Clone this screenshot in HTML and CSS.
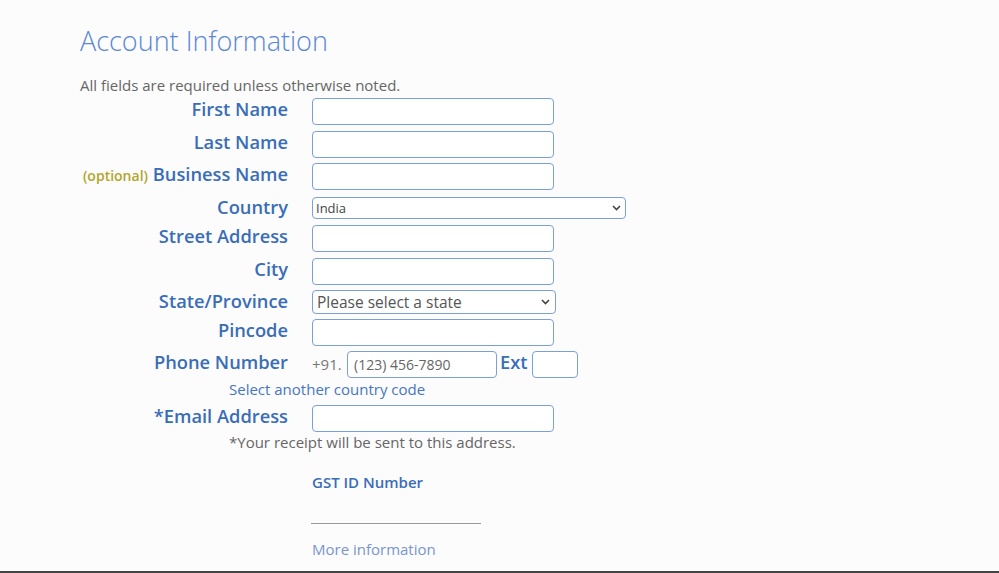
FILE: index.html
```html
<!DOCTYPE html>
<html lang="en">
<head>
<meta charset="utf-8">
<title>Account Information</title>
<link rel="stylesheet" href="styles.css">
</head>
<body>
<div class="page">
  <h1 class="title">Account Information</h1>
  <p class="note">All fields are required unless otherwise noted.</p>
  <form class="form">
    <div class="row row-first">
      <label class="label">First Name</label>
      <input class="field" type="text">
    </div>
    <div class="row row-tight">
      <label class="label">Last Name</label>
      <input class="field" type="text">
    </div>
    <div class="row">
      <label class="label"><span class="optional">(optional)</span> Business Name</label>
      <input class="field" type="text">
    </div>
    <div class="row row-country">
      <label class="label">Country</label>
      <div class="select-wrap select-country">
        <select class="select"><option>India</option></select>
        <svg class="chev" width="9" height="6" viewBox="0 0 9 6"><path d="M1 1 L4.5 4.5 L8 1" fill="none" stroke="#444" stroke-width="1.6"/></svg>
      </div>
    </div>
    <div class="row">
      <label class="label">Street Address</label>
      <input class="field" type="text">
    </div>
    <div class="row row-tight">
      <label class="label">City</label>
      <input class="field" type="text">
    </div>
    <div class="row row-state">
      <label class="label">State/Province</label>
      <div class="select-wrap select-state">
        <select class="select"><option>Please select a state</option></select>
        <svg class="chev" width="9" height="6" viewBox="0 0 9 6"><path d="M1 1 L4.5 4.5 L8 1" fill="none" stroke="#444" stroke-width="1.6"/></svg>
      </div>
    </div>
    <div class="row row-tight">
      <label class="label">Pincode</label>
      <input class="field" type="text">
    </div>
    <div class="row row-phone">
      <label class="label">Phone Number</label>
      <div class="phone">
        <span class="prefix">+91.</span>
        <input class="field field-phone" type="text" placeholder="(123) 456-7890">
        <span class="ext-label">Ext</span>
        <input class="field field-ext" type="text">
      </div>
    </div>
    <a class="country-link">Select another country code</a>
    <div class="row row-email">
      <label class="label">*Email Address</label>
      <input class="field" type="text">
    </div>
    <p class="receipt">*Your receipt will be sent to this address.</p>
    <div class="gst">
      <div class="gst-label">GST ID Number</div>
      <input class="gst-input" type="text">
      <a class="more">More information</a>
    </div>
  </form>
</div>
<div class="bottom-bar"></div>
</body>
</html>
```
FILE: styles.css
```css
html, body {
  margin: 0;
  padding: 0;
  background: #fcfcfc;
  font-family: "Open Sans", "Liberation Sans", sans-serif;
}
body {
  height: 573px;
  display: flex;
  flex-direction: column;
  overflow: hidden;
}
.page {
  flex: 1;
  padding: 0 0 0 80px;
}
.title {
  margin: 24px 0 0 0;
  font-size: 27px;
  line-height: 34px;
  font-weight: 300;
  color: #5b87d6;
}
.note {
  margin: 17px 0 0 0;
  font-size: 15px;
  line-height: 20px;
  color: #666;
}
.form {
  display: flex;
  flex-direction: column;
}
.row {
  display: flex;
  align-items: flex-start;
  gap: 24px;
  margin-bottom: 6px;
}
.row-first { margin-top: 3px; }
.row-tight { margin-bottom: 5px; }
.label {
  width: 208px;
  flex: none;
  text-align: right;
  font-size: 18.3px;
  line-height: 22px;
  font-weight: 600;
  color: #3a6db8;
  white-space: nowrap;
}
.optional {
  font-size: 14px;
  color: #b3a52c;
}
.field {
  box-sizing: border-box;
  width: 242px;
  height: 27px;
  border: 1px solid #7ba0d8;
  border-radius: 4px;
  background: #fff;
  padding: 0 6px;
  margin: 0;
  font-family: inherit;
}
.row-country { margin-bottom: 6px; }
.row-state { margin-bottom: 5px; }
.select-wrap {
  position: relative;
}
.select {
  appearance: none;
  -webkit-appearance: none;
  box-sizing: border-box;
  border: 1px solid #7ba0d8;
  border-radius: 4px;
  background: #fff;
  margin: 0;
  font-family: inherit;
  color: #444;
}
.select-country .select {
  width: 314px;
  height: 22px;
  font-size: 13px;
  padding: 0 3px;
}
.select-state .select {
  width: 244px;
  height: 24px;
  font-size: 15.5px;
  padding: 0 4px;
  color: #555;
}
.chev {
  position: absolute;
  top: 50%;
  margin-top: -3px;
}
.select-country .chev { right: 5px; }
.select-state .chev { right: 6px; }
.phone {
  display: flex;
  align-items: flex-start;
}
.prefix {
  font-size: 15px;
  line-height: 20px;
  color: #777;
  margin-top: 3px;
  width: 35px;
}
.field-phone {
  width: 150px;
  font-size: 14px;
  padding-left: 6px;
}
.field-phone::placeholder { color: #666; }
.ext-label {
  font-size: 18.3px;
  line-height: 22px;
  font-weight: 600;
  color: #3a6db8;
  margin: 0 4px 0 3px;
}
.field-ext { width: 46px; }
.row-phone { margin-bottom: 0; }
.country-link {
  margin: 1px 0 0 149px;
  font-size: 15px;
  line-height: 20px;
  color: #4676c2;
  height: 26px;
}
.row-email { margin-bottom: 0; }
.receipt {
  margin: 0 0 0 149px;
  font-size: 15px;
  line-height: 20px;
  color: #666;
}
.gst {
  margin: 20px 0 0 232px;
  display: flex;
  flex-direction: column;
  align-items: flex-start;
}
.gst-label {
  font-size: 15px;
  line-height: 20px;
  font-weight: 600;
  color: #3a6db8;
}
.gst-input {
  box-sizing: border-box;
  width: 170px;
  height: 20px;
  margin: 12px 0 0 -1px;
  border: none;
  border-bottom: 1px solid #999;
  background: transparent;
  padding: 0;
}
.more {
  margin-top: 15px;
  font-size: 15px;
  line-height: 20px;
  color: #7896cc;
}
.bottom-bar {
  height: 2px;
  background: #444;
  flex: none;
}
```
